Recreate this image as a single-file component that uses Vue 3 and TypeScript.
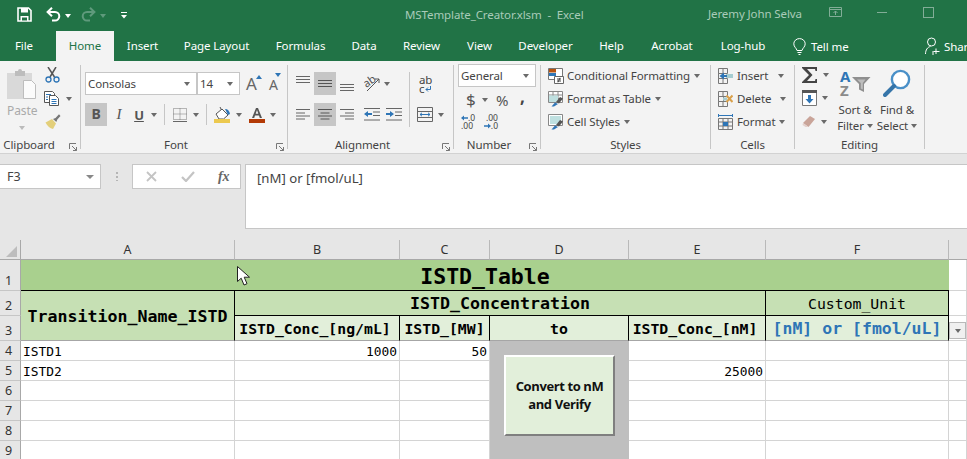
<script setup lang="ts">
interface Tab { name: string; width: number; active?: boolean }
const tabs: Tab[] = [
  { name: 'File', width: 56 }, { name: 'Home', width: 58, active: true }, { name: 'Insert', width: 57 },
  { name: 'Page Layout', width: 91 }, { name: 'Formulas', width: 77 }, { name: 'Data', width: 50 },
  { name: 'Review', width: 65 }, { name: 'View', width: 51 }, { name: 'Developer', width: 81 },
  { name: 'Help', width: 51 }, { name: 'Acrobat', width: 70 }, { name: 'Log-hub', width: 72 },
]
const columns = ['A', 'B', 'C', 'D', 'E', 'F']
const rows = [
  { n: 4, a: 'ISTD1', b: '1000', c: '50', e: '' },
  { n: 5, a: 'ISTD2', b: '', c: '', e: '25000' },
  { n: 6, a: '', b: '', c: '', e: '' },
  { n: 7, a: '', b: '', c: '', e: '' },
  { n: 8, a: '', b: '', c: '', e: '' },
  { n: 9, a: '', b: '', c: '', e: '' },
]
</script>

<template>
  <div class="app">
    <header class="titlebar">
      <div class="qat">
        <svg class="i-save" width="15" height="15" viewBox="0 0 15 15"><path d="M1 1h10.500L14 3.500V14H1z" fill="none" stroke="#fff" stroke-width="1.600"/><path d="M4 1h7v4.500H4zM3.500 9h8v5h-8z" fill="#fff"/><path d="M5 10.500h5v3H5z" fill="#217346"/></svg>
        <svg class="i-undo" width="15" height="15" viewBox="0 0 15 15"><path d="M2 5h7a4.300 4.300 0 0 1 0 8.600H6" fill="none" stroke="#fff" stroke-width="2"/><path d="M6 .8 1.600 5 6 9.200" fill="none" stroke="#fff" stroke-width="2"/></svg>
        <i class="caret white c-undo"></i>
        <svg class="i-redo" width="15" height="15" viewBox="0 0 15 15"><path d="M13 5H6a4.300 4.300 0 0 0 0 8.600h3" fill="none" stroke="#5f9a7c" stroke-width="2"/><path d="M9 .8 13.400 5 9 9.200" fill="none" stroke="#5f9a7c" stroke-width="2"/></svg>
        <i class="caret dim c-redo"></i>
        <svg class="i-qat" width="6" height="7" viewBox="0 0 6 7"><path d="M0 .5h6" stroke="#fff"/><path d="M0 3h6L3 6.500z" fill="#fff"/></svg>
      </div>
      <span class="doc-title">MSTemplate_Creator.xlsm&nbsp; -&nbsp; Excel</span>
      <span class="user">Jeremy John Selva</span>
      <svg class="i-display" width="14" height="11" viewBox="0 0 14 11"><path d="M.5.5h12v9H.5zM.5 2.500h12M6.500 8V4M4.500 6l2-2 2 2" fill="none" stroke="#82ad97"/></svg>
      <span class="i-min"></span>
      <span class="i-max"></span>
    </header>

    <nav class="tabs">
      <span v-for="t in tabs" :key="t.name" class="tab" :class="{ active: t.active }" :style="{ width: t.width + 'px' }">{{ t.name }}</span>
      <svg class="i-bulb" width="13" height="17" viewBox="0 0 13 17"><path d="M4 12.500C3.500 10 .8 9 .8 5.800a5.700 5.200 0 0 1 11.400 0C12.200 9 9.500 10 9 12.500z" fill="none" stroke="#fff"/><path d="M4.500 14.500h4M5.500 16.500h2" stroke="#fff"/></svg>
      <span class="tell">Tell me</span>
      <svg class="i-person" width="15" height="18" viewBox="0 0 15 18"><circle cx="6.500" cy="5" r="4" fill="none" stroke="#fff"/><path d="M.5 17c0-4 2-7 5-7.500M8 14v4M11 11.500v5.500M8.500 14.500h6" fill="none" stroke="#fff"/></svg>
      <span class="share">Share</span>
    </nav>

    <section class="ribbon">
      <!-- Clipboard -->
      <div class="group g-clip">
        <div class="clip-body">
          <div class="paste">
            <svg width="30" height="31" viewBox="0 0 30 31"><path d="M0 4h25v26H0z" fill="#d9d9d9"/><path d="M8 2h3a2 2 0 0 1 4 0h3v5H8z" fill="#bdbdbd"/><path d="M16.500 11.500h8l4 4v14h-12z" fill="#fbfbfb" stroke="#bdbdbd"/></svg>
            <span class="paste-label">Paste</span>
            <i class="caret pale"></i>
          </div>
          <div class="clip-tools">
            <svg width="15" height="16" viewBox="0 0 15 16"><path d="M3 0l6.500 10M11 0 5 10" stroke="#555" stroke-width="1.500" fill="none"/><circle cx="3.500" cy="12.500" r="2.500" fill="none" stroke="#2e75b6" stroke-width="1.300"/><circle cx="11.500" cy="12.500" r="2.500" fill="none" stroke="#2e75b6" stroke-width="1.300"/></svg>
            <div class="copy-row">
              <svg width="16" height="15" viewBox="0 0 16 15"><path d="M.5.5h8l2 2v9H.5z" fill="#fff" stroke="#555"/><path d="M5.500 4.500h6l3 3v7h-9z" fill="#fff" stroke="#555"/><path d="M2 3.500h5M2 6h2M2 8.500h2M7.500 8.500h5M7.500 10.500h5M7.500 12.500h5" stroke="#2e75b6"/></svg>
              <i class="caret"></i>
            </div>
            <svg width="16" height="15" viewBox="0 0 16 15"><path d="M.5 8.500 7 5l4 4.500-3 5.500C5 14.500 2.500 12 .5 8.500z" fill="#e3cf7a"/><path d="M8 5l2.500-1L14 .3l1.500 1.700-3.200 3.500-1 2.500z" fill="#777"/></svg>
          </div>
        </div>
        <div class="label lab-clip">Clipboard<svg class="launcher" width="8" height="8" viewBox="0 0 8 8"><path d="M.5 6V.5H7M3 3l4.500 4.500M4 7.500h3.500V4" fill="none" stroke="#777"/></svg></div>
      </div>

      <!-- Font -->
      <div class="group g-font">
        <div class="row font-r1">
          <div class="select fontname"><span>Consolas</span><i class="caret"></i></div>
          <div class="select fontsize"><span>14</span><i class="caret"></i></div>
          <div class="size-btn grow"><span class="a-big">A</span><svg width="6" height="4" viewBox="0 0 6 4"><path d="M0 4 3 0l3 4z" fill="#2e75b6"/></svg></div>
          <div class="size-btn shrink"><span class="a-small">A</span><svg width="6" height="4" viewBox="0 0 6 4"><path d="M0 0h6L3 4z" fill="#2e75b6"/></svg></div>
        </div>
        <div class="row font-r2">
          <span class="btn-b on">B</span>
          <span class="btn-i">I</span>
          <span class="btn-u">U</span>
          <i class="caret"></i>
          <span class="vsep"></span>
          <svg width="14" height="14" viewBox="0 0 14 14"><path d="M.5.5h13v11H.5zM7 .5v11M.5 6h13" fill="none" stroke="#777" stroke-dasharray="1 1"/><path d="M0 13.500h14" stroke="#666"/></svg>
          <i class="caret c-border"></i>
          <span class="vsep sep2"></span>
          <svg class="fill-ico" width="17" height="16" viewBox="0 0 17 16"><path d="M2 7 8 2l6 6-4.500 4H5z" fill="#fff" stroke="#555"/><path d="M7.500 3 6 0" stroke="#555"/><path d="M11 2c3 0 4.500 2 5 5l-2 1z" fill="#2e75b6"/><path d="M0 12h16v4H0z" fill="#ecc94f"/></svg>
          <i class="caret c-fill"></i>
          <svg class="color-ico" width="16" height="16" viewBox="0 0 16 16"><path d="M3 11 7 1h2l4 10h-2.200l-.8-2.500H6L5.200 11zM6.700 6.800h2.600L8 3z" fill="#555" fill-rule="evenodd"/><path d="M0 12h16v4H0z" fill="#b33a06"/></svg>
          <i class="caret c-color"></i>
        </div>
        <div class="label lab-l">Font<svg class="launcher" width="8" height="8" viewBox="0 0 8 8"><path d="M.5 6V.5H7M3 3l4.500 4.500M4 7.500h3.500V4" fill="none" stroke="#777"/></svg></div>
      </div>

      <!-- Alignment -->
      <div class="group g-align">
        <div class="align-body">
          <div class="align-main">
            <div class="row">
              <span class="cell-btn top"><svg width="14" height="8" viewBox="0 0 14 8"><path d="M0 .5h14M0 3.500h14M0 6.500h14" stroke="#666"/></svg></span>
              <span class="cell-btn on"><svg width="14" height="8" viewBox="0 0 14 8"><path d="M0 .5h14M0 3.500h14M0 6.500h14" stroke="#555"/></svg></span>
              <span class="cell-btn bottom"><svg width="14" height="8" viewBox="0 0 14 8"><path d="M0 .5h14M0 3.500h14M0 6.500h14" stroke="#666"/></svg></span>
              <svg class="orient" width="17" height="17" viewBox="0 0 17 17"><text x="0" y="10" class="ico-ab" font-size="11" transform="rotate(-35 6 8)">ab</text><path d="M3 16 15 4M11 4h4v4" fill="none" stroke="#555"/></svg>
              <i class="caret c-or"></i>
            </div>
            <div class="row r2">
              <span class="cell-btn"><svg width="14" height="11" viewBox="0 0 14 11"><path d="M0 .5h14M0 4h9M0 7h14M0 10h9" stroke="#666"/></svg></span>
              <span class="cell-btn on"><svg width="14" height="11" viewBox="0 0 14 11"><path d="M0 .5h14M2.500 4h9M0 7h14M2.500 10h9" stroke="#555"/></svg></span>
              <span class="cell-btn"><svg width="14" height="11" viewBox="0 0 14 11"><path d="M0 .5h14M5 4h9M0 7h14M5 10h9" stroke="#666"/></svg></span>
              <svg class="indent" width="16" height="13" viewBox="0 0 16 13"><path d="M0 .5h16M9 4h7M9 7.500h7M0 12h16" stroke="#666"/><path d="M0 6 4 3v2h4v2H4v2z" fill="#2e75b6"/></svg>
              <svg class="indent2" width="16" height="13" viewBox="0 0 16 13"><path d="M0 .5h16M9 4h7M9 7.500h7M0 12h16" stroke="#666"/><path d="M8 6 4 3v2H0v2h4v2z" fill="#2e75b6"/></svg>
            </div>
          </div>
          <span class="vsep tall"></span>
          <div class="align-side">
            <div class="wrap"><span class="wrap-l">ab</span><span class="wrap-l wrap-c">c<svg width="6" height="6" viewBox="0 0 6 6"><path d="M5.500 0v3.500H1M3 1.500 1 3.500l2 2" fill="none" stroke="#2e75b6"/></svg></span></div>
            <div class="merge"><svg width="16" height="15" viewBox="0 0 16 15"><path d="M.5.5h15v14H.5zM.5 4.500h15M.5 10.500h15" fill="none" stroke="#666"/><path d="M3 7.500h10M5 5.800 3 7.500l2 1.700M11 5.800l2 1.700-2 1.700" fill="none" stroke="#2e75b6"/></svg><i class="caret"></i></div>
          </div>
        </div>
        <div class="label lab-l">Alignment<svg class="launcher" width="8" height="8" viewBox="0 0 8 8"><path d="M.5 6V.5H7M3 3l4.500 4.500M4 7.500h3.500V4" fill="none" stroke="#777"/></svg></div>
      </div>

      <!-- Number -->
      <div class="group g-num">
        <div class="num-body">
          <div class="select general"><span>General</span><i class="caret"></i></div>
          <div class="row num-r2"><span class="dollar">$</span><i class="caret"></i><span class="pct">%</span><span class="comma">,</span></div>
          <div class="row num-r3">
            <div class="dec">
              <div class="dec-line"><svg width="7" height="6" viewBox="0 0 7 6"><path d="M0 3 3 .5v1.800h4v1.400H3v1.800z" fill="#2e75b6"/></svg><span>.0</span></div>
              <div class="dec-line"><span>.00</span></div>
            </div>
            <div class="dec d2">
              <div class="dec-line end"><span>.00</span></div>
              <div class="dec-line end"><svg width="7" height="6" viewBox="0 0 7 6"><path d="M7 3 4 .5v1.800H0v1.400h4v1.800z" fill="#2e75b6"/></svg><span>.0</span></div>
            </div>
          </div>
        </div>
        <div class="label lab-l">Number<svg class="launcher" width="8" height="8" viewBox="0 0 8 8"><path d="M.5 6V.5H7M3 3l4.500 4.500M4 7.500h3.500V4" fill="none" stroke="#777"/></svg></div>
      </div>

      <!-- Styles -->
      <div class="group g-styles">
        <div class="list">
          <div class="list-row">
            <svg width="16" height="16" viewBox="0 0 16 16"><path d="M.5.5h14v11H.5z" fill="#fff" stroke="#777"/><path d="M1 1h7v3.500H1z" fill="#b7520f"/><path d="M1 5h7v3H1z" fill="#2e75b6"/><path d="M6.500 8.500h9v7h-9z" fill="#fff" stroke="#666"/><path d="M9 11h4M9 13h4M12 9.800l-2 4.500" stroke="#444" fill="none"/></svg>
            <span>Conditional Formatting</span><i class="caret"></i>
          </div>
          <div class="list-row">
            <svg width="16" height="16" viewBox="0 0 16 16"><path d="M.5.5h14v11H.5zM.5 4h14M.5 7.500h14M5 .5v11M10 .5v11" fill="#fff" stroke="#888"/><path d="M1 4.500h9V11H1z" fill="#bfe0e0"/><path d="M12 6l3 1.500-4 5-3-1.500z" fill="#555"/><path d="M7 11.500 10 13 6 15.500H3.500z" fill="#2e75b6"/></svg>
            <span>Format as Table</span><i class="caret"></i>
          </div>
          <div class="list-row">
            <svg width="16" height="16" viewBox="0 0 16 16"><path d="M.5.5h14v11H.5z" fill="#fff" stroke="#888"/><path d="M2 2h11v8H2z" fill="#bfe0e0"/><path d="M12 6l3 1.500-4 5-3-1.500z" fill="#555"/><path d="M7 11.500 10 13 6 15.500H3.500z" fill="#2e75b6"/></svg>
            <span>Cell Styles</span><i class="caret"></i>
          </div>
        </div>
        <div class="label">Styles</div>
      </div>

      <!-- Cells -->
      <div class="group g-cells">
        <div class="list">
          <div class="list-row">
            <svg width="15" height="16" viewBox="0 0 15 16"><path d="M.5.500h9v5h-9zM5 .5v5M.5 5.500h5v5h-5zM.5 10.500h9v5h-9zM5 10.500v5" fill="none" stroke="#777"/><path d="M8 6h7v4H8z" fill="#a6ccd0"/><path d="M1.500 8 6 4.500v2.500h3v2H6v2.500z" fill="#2e75b6"/></svg>
            <span>Insert</span><i class="caret c-ins"></i>
          </div>
          <div class="list-row">
            <svg width="15" height="16" viewBox="0 0 15 16"><path d="M.5.500h9v5h-9zM5 .5v5M.5 5.500h5v5h-5zM.5 10.500h9v5h-9zM5 10.500v5" fill="none" stroke="#777"/><path d="M5 6.500h4v3H5z" fill="#a6ccd0"/><path d="M8.500 4.500l6 6.500M14.500 4.500l-6 6.500" stroke="#d9a04a" stroke-width="2"/></svg>
            <span>Delete</span><i class="caret c-del"></i>
          </div>
          <div class="list-row">
            <svg width="15" height="16" viewBox="0 0 15 16"><path d="M.5 1.500h14M.5 0v3M14.500 0v3" stroke="#2e75b6"/><path d="M.5 4.500h14v11H.5zM.5 8h14M.5 12h14M5 4.500v11M10 4.500v11" fill="none" stroke="#777"/><path d="M5 8h5v4H5z" fill="#2e75b6"/></svg>
            <span>Format</span><i class="caret c-for"></i>
          </div>
        </div>
        <div class="label">Cells</div>
      </div>

      <!-- Editing -->
      <div class="group g-edit">
        <div class="edit-body">
          <div class="edit-col">
            <div class="edit-row"><svg class="sigma" width="16" height="16" viewBox="0 0 16 16"><path d="M0 0h15v4h-1.500L13 2H5l5.500 6L5 14h8l.5-2H15v4H0v-1l7-7-7-7z" fill="#444"/></svg><i class="caret"></i></div>
            <div class="edit-row"><svg class="down" width="15" height="16" viewBox="0 0 15 16"><path d="M.5.5h14v15H.5z" fill="#fff" stroke="#777"/><path d="M0 0h15v3H0z" fill="#555"/><path d="M6 5h3v4h2.500l-4 4.500-4-4.500H6z" fill="#2e75b6"/></svg><i class="caret"></i></div>
            <div class="edit-row"><svg class="eraser" width="14" height="13" viewBox="0 0 14 13"><path d="M1 8 8 1l5 3-6.500 8z" fill="#c9a499"/><path d="M1 8l5.500 4H3.500L.5 10z" fill="#e3d0cb"/></svg><i class="caret"></i></div>
          </div>
          <div class="big sort">
            <div class="sort-ico">
              <div class="az"><span class="az-a">A</span><span class="az-z">Z</span></div>
              <svg width="19" height="16" viewBox="0 0 19 16"><path d="M0 1h18.500L12 8v8l-5-2.500V8z" fill="#8f8f8f"/><path d="M5 3.500h8.500L10.800 7v6.500L8.800 12.500V7z" fill="#bdbdbd"/></svg>
            </div>
            <span>Sort &amp;</span>
            <span>Filter<i class="caret in"></i></span>
          </div>
          <div class="big find">
            <svg width="28" height="28" viewBox="0 0 28 28"><circle cx="17.500" cy="10.500" r="8.600" fill="#fff" stroke="#4a90c8" stroke-width="2.400"/><path d="M11 17 2 26" stroke="#3675a9" stroke-width="4" stroke-linecap="round"/></svg>
            <span>Find &amp;</span>
            <span>Select<i class="caret in"></i></span>
          </div>
        </div>
        <div class="label">Editing</div>
      </div>
    </section>

    <section class="formula">
      <div class="namebox"><span>F3</span><i class="caret big-c"></i></div>
      <span class="dots"></span>
      <div class="fx-box">
        <svg width="11" height="11" viewBox="0 0 11 11"><path d="M1 1l9 9M10 1l-9 9" stroke="#c4c4c4" stroke-width="1.800"/></svg>
        <svg width="14" height="11" viewBox="0 0 14 11"><path d="M1 6l4 4 8-9" fill="none" stroke="#c4c4c4" stroke-width="2.200"/></svg>
        <span class="fx">fx</span>
      </div>
      <div class="finput">[nM] or [fmol/uL]</div>
    </section>

    <section class="sheet">
      <div class="corner"><svg width="11" height="11" viewBox="0 0 11 11"><path d="M11 0v11H0z" fill="#bdbdbd"/></svg></div>
      <div v-for="c in columns" :key="c" class="colhead">{{ c }}</div>
      <div class="colhead last"></div>

      <div class="rowhead">1</div>
      <div class="title">ISTD_Table</div>
      <div class="c"></div>

      <div class="rowhead">2</div>
      <div class="name-head">Transition_Name_ISTD</div>
      <div class="conc-head">ISTD_Concentration</div>
      <div class="unit-head">Custom_Unit</div>
      <div class="c"></div>

      <div class="rowhead">3</div>
      <div class="sub shift">ISTD_Conc_[ng/mL]</div>
      <div class="sub">ISTD_[MW]</div>
      <div class="sub">to</div>
      <div class="sub shift">ISTD_Conc_[nM]</div>
      <div class="sub unit">[nM] or [fmol/uL]</div>
      <div class="c dd-cell"><span class="dropdown"><i class="caret"></i></span></div>

      <template v-for="(r, i) in rows" :key="r.n">
        <div class="rowhead">{{ r.n }}</div>
        <div class="c">{{ r.a }}</div>
        <div class="c num">{{ r.b }}</div>
        <div class="c num">{{ r.c }}</div>
        <div v-if="i === 0" class="shape-bg"><div class="macro-btn">Convert to nM<br>and Verify</div></div>
        <div class="c num">{{ r.e }}</div>
        <div class="c"></div>
        <div class="c"></div>
      </template>

      <svg class="cursor" width="14" height="20" viewBox="0 0 14 20"><path d="M.5.5V15.500l3.700-3.300 2.800 6.800 3-1.300-2.800-6.500h5.300z" fill="#fff" stroke="#222"/></svg>
    </section>
  </div>
</template>

<style>
html, body { margin: 0; overflow: hidden; background: #fff; }
</style>

<style scoped>
.app { width: 967px; height: 459px; overflow: hidden; font-family: "Noto Sans", "Open Sans", sans-serif; font-size: 11.500px; letter-spacing: -.1px; color: #444; display: flex; flex-direction: column; }
.caret { display: inline-block; flex: none; width: 0; height: 0; border-left: 3.500px solid transparent; border-right: 3.500px solid transparent; border-top: 4px solid #6a6a6a; }
.caret.white { border-top-color: #fff; }
.caret.dim { border-top-color: #5f9a7c; }
.caret.pale { border-top-color: #bbb; }

.titlebar { height: 31px; flex: none; background: #217346; display: flex; align-items: center; color: #a9cbb9; }
.qat { display: flex; align-items: center; width: 405px; padding-left: 17px; box-sizing: border-box; margin-top: -2px; }
.i-undo { margin-left: 14px; }
.c-undo { margin-left: 4px; margin-top: 2px; }
.i-redo { margin-left: 10px; }
.c-redo { margin-left: 4px; margin-top: 2px; }
.i-qat { margin-left: 15px; margin-top: 2px; }
.doc-title { width: 303px; flex: none; margin-top: -3px; }
.user { width: 121px; flex: none; margin-top: -4px; }
.i-display { margin-right: 34px; flex: none; margin-top: -6px; }
.i-min { width: 10px; height: 1px; background: #82ad97; flex: none; margin-right: 36px; margin-top: -6px; }
.i-max { width: 9px; height: 9px; border: 1px solid #82ad97; flex: none; margin-top: -6px; }

.tabs { height: 30px; flex: none; background: #217346; display: flex; align-items: center; color: #fff; white-space: nowrap; }
.tab { flex: none; height: 30px; line-height: 29px; text-align: center; box-sizing: border-box; }
.tab:first-child { text-align: left; padding-left: 15px; }
.tab.active { background: #f3f3f3; color: #217346; }
.i-bulb { margin-left: 14px; flex: none; }
.tell { margin-left: 5px; width: 114px; flex: none; }
.i-person { flex: none; }
.share { margin-left: 4px; }

.ribbon { height: 92px; flex: none; background: #f3f3f3; border-bottom: 1px solid #d2d2d2; display: flex; box-sizing: content-box; }
.group { height: 84px; margin-top: 4px; flex: none; border-right: 1px solid #c6c6c6; box-sizing: border-box; position: relative; display: flex; flex-direction: column; }
.label { position: absolute; left: 0; right: 0; top: 72px; height: 16px; line-height: 16px; text-align: center; color: #444; }
.lab-l { padding-right: 16px; }
.lab-clip { padding-right: 22px; text-align: center; }
.launcher { position: absolute; right: 3px; top: 6px; }
.row { display: flex; align-items: center; }

.g-clip { width: 81px; }
.clip-body { display: flex; height: 72px; }
.paste { width: 44px; padding-left: 7px; box-sizing: border-box; display: flex; flex-direction: column; align-items: flex-start; padding-top: 4px; }
.paste-label { color: #aaa; width: 27px; text-align: center; margin-top: 3px; line-height: 16px; font-size: 12px; }
.paste .caret { margin-left: 12px; margin-top: 7px; }
.clip-tools { display: flex; flex-direction: column; padding-top: 2px; align-items: flex-start; }
.clip-tools > svg:first-child { margin-left: 1px; }
.copy-row { display: flex; align-items: center; margin-top: 8px; margin-bottom: 8px; }
.copy-row .caret { margin-left: 6px; }
.clip-tools > svg:last-child { margin-left: 1px; }

.g-font { width: 207px; padding-left: 4px; }
.font-r1 { height: 23px; margin-top: 7px; }
.select { background: #fff; border: 1px solid #c6c6c6; box-sizing: border-box; display: flex; align-items: center; justify-content: space-between; padding: 0 6px 0 2px; height: 23px; color: #444; }
.fontname { width: 111px; border-right: none; }
.fontsize { width: 44px; border-left: 2px solid #c6c6c6; }
.size-btn { display: flex; align-items: flex-start; height: 23px; color: #666; }
.grow { margin-left: 6px; }
.shrink { margin-left: 7px; }
.a-big { font-size: 17px; line-height: 23px; letter-spacing: 0; }
.a-small { font-size: 14px; line-height: 25px; letter-spacing: 0; }
.grow svg { margin-top: 3px; margin-left: -1px; }
.shrink svg { margin-top: 1px; margin-left: -3px; }
.font-r2 { height: 23px; margin-top: 8px; }
.btn-b { width: 22px; height: 23px; line-height: 22px; text-align: center; font-weight: 700; font-size: 14px; background: #c6c6c6; color: #555; flex: none; }
.btn-i { width: 10px; margin-left: 7px; text-align: center; font: italic 15px "Liberation Serif", serif; color: #555; }
.btn-u { width: 14px; margin-left: 8px; text-align: center; font-weight: 700; font-size: 13px; color: #555; text-decoration: underline; }
.font-r2 .caret { margin-left: 5px; }
.vsep { display: block; width: 1px; height: 21px; background: #c6c6c6; flex: none; margin-left: 7px; margin-right: 8px; }
.font-r2 .c-border { margin-left: 6px; }
.sep2 { margin-left: 7px; margin-right: 7px; }
.color-ico { margin-left: 7px; }

.g-align { width: 166px; padding-left: 4px; }
.align-body { display: flex; padding-top: 7px; }
.align-main { width: 116px; flex: none; }
.align-main .r2 { margin-top: 8px; }
.cell-btn { width: 22px; height: 23px; display: flex; align-items: center; justify-content: center; flex: none; box-sizing: border-box; }
.cell-btn.top { align-items: flex-start; padding-top: 4px; }
.cell-btn.on { background: #c6c6c6; }
.cell-btn.bottom { align-items: flex-end; padding-bottom: 3px; }
.orient { margin-left: 6px; }
.ico-ab { font-family: "Noto Sans", sans-serif; fill: #555; }
.c-or { margin-left: 3px; }
.indent { margin-left: 6px; }
.indent2 { margin-left: 6px; }
.vsep.tall { height: 55px; margin: 0 0 0 1px; }
.align-side { display: flex; flex-direction: column; padding-left: 9px; }
.wrap { display: flex; flex-direction: column; font-size: 11.500px; height: 23px; padding-top: 3px; box-sizing: border-box; color: #444; }
.wrap-l { height: 9px; line-height: 9px; display: flex; align-items: center; gap: 1px; }
.merge { display: flex; align-items: center; height: 23px; margin-top: 8px; margin-left: -2px; }
.merge .caret { margin-left: 5px; }

.g-num { width: 87px; padding-left: 4px; }
.num-body { margin-top: -1px; }
.general { width: 78px; }
.num-r2 { height: 23px; margin-top: 1px; padding-left: 8px; }
.dollar { font-size: 17px; width: 11px; color: #555; }
.num-r2 .caret { margin-left: 5px; }
.pct { font-size: 15px; margin-left: 8px; width: 16px; color: #555; }
.comma { font-size: 17px; font-weight: 700; margin-left: 8px; line-height: 14px; margin-top: -6px; }
.num-r3 { height: 21px; padding-left: 3px; }
.dec { width: 15px; font-size: 8.500px; letter-spacing: 0; color: #444; flex: none; }
.d2 { margin-left: 7px; }
.dec-line { height: 8px; line-height: 8px; display: flex; align-items: center; }
.dec-line.end { justify-content: flex-end; }

.g-styles { width: 170px; padding-left: 7px; }
.g-cells { width: 84px; padding-left: 7px; }
.list { margin-top: -1px; }
.list-row { height: 23px; display: flex; align-items: center; white-space: nowrap; }
.list-row svg { flex: none; margin-right: 3px; }
.list-row .caret { margin-left: 4px; }
.g-cells .list-row svg { margin-right: 4px; }
.g-cells .list-row .c-ins { margin-left: 10px; }
.g-cells .list-row .c-del { margin-left: 9px; }
.g-cells .list-row .c-for { margin-left: 4px; }

.g-edit { width: 130px; }
.edit-body { display: flex; }
.edit-col { width: 39px; padding-left: 7px; box-sizing: border-box; flex: none; margin-top: -2px; }
.edit-row { height: 23.500px; display: flex; align-items: center; }
.edit-row .caret { margin-left: 5px; }
.big { display: flex; flex-direction: column; align-items: center; line-height: 16px; width: 42px; padding-top: 4px; flex: none; white-space: nowrap; }
.big > svg { margin-bottom: 5px; }
.big .caret.in { margin-left: 3px; vertical-align: 2px; }
.sort-ico { display: flex; align-items: flex-start; height: 28px; margin-bottom: 5px; width: 30px; }
.az { display: flex; flex-direction: column; width: 12px; font-weight: 700; font-size: 15px; line-height: 14px; flex: none; }
.az-a { color: #2e75b6; }
.az-z { color: #8a8a8a; }
.sort-ico svg { margin-top: 7px; flex: none; }

.formula { height: 86px; flex: none; background: #e6e6e6; display: flex; align-items: flex-start; padding-top: 10px; box-sizing: border-box; }
.namebox { width: 101px; height: 25px; background: #fff; border: 1px solid #c6c6c6; border-left: none; box-sizing: border-box; display: flex; align-items: center; justify-content: space-between; padding: 0 6px 0 7px; flex: none; color: #444; font-size: 12.500px; }
.big-c { border-left-width: 4px; border-right-width: 4px; border-top-color: #888; }
.dots { width: 2px; height: 9px; margin: 8px 14px 0 15px; flex: none; background: repeating-linear-gradient(#b5b5b5 0 2px, transparent 2px 4px); }
.fx-box { width: 109px; height: 25px; background: #fff; border: 1px solid #c6c6c6; box-sizing: border-box; display: flex; align-items: center; padding-left: 13px; gap: 24px; flex: none; }
.fx-box .fx { font: italic 700 14px "Liberation Serif", serif; color: #666; margin-left: -1px; }
.finput { margin-left: 4px; flex: 1; height: 65px; background: #fff; border: 1px solid #c6c6c6; border-right: none; box-sizing: border-box; padding: 4px 0 0 11px; font-size: 13.200px; line-height: 18px; letter-spacing: 0; color: #444; }

.sheet { position: relative; flex: 1; display: grid; grid-template-columns: 21px 214px 165px 90px 139px 137px 183px 18px; grid-template-rows: 20px 31px 25px 25px 20px 20px 20px 20px 20px 20px; font-family: "DejaVu Sans Mono", monospace; color: #000; background: #fff; letter-spacing: 0; }
.sheet > div { box-sizing: border-box; min-width: 0; white-space: nowrap; }
.corner { background: #e6e6e6; border-right: 1px solid #a8a8a8; border-bottom: 1px solid #a8a8a8; padding: 6px 0 0 6px; }
.corner svg { display: block; }
.colhead { background: #e6e6e6; border-right: 1px solid #b9b9b9; border-bottom: 1px solid #a8a8a8; text-align: center; font: 12.500px/20px "Noto Sans", sans-serif; color: #333; }
.colhead.last { border-right: none; }
.rowhead { background: #e6e6e6; border-right: 1px solid #a8a8a8; border-bottom: 1px solid #c6c6c6; font: 12.500px "Noto Sans", sans-serif; color: #333; display: flex; align-items: flex-end; padding: 0 0 1px 5px; }
.c { border-right: 1px solid #d4d4d4; border-bottom: 1px solid #d4d4d4; font-size: 12.900px; line-height: 21px; padding: 0 2px; overflow: hidden; }
.num { text-align: right; }
.title { grid-column: span 6; background: #a9d08e; border-bottom: 1px solid #000; font-weight: 700; font-size: 21.500px; line-height: 34px; text-align: center; }
.name-head { grid-row: span 2; background: #c6e0b4; border-right: 1px solid #000; border-bottom: 1px solid #a6a6a6; font-weight: 700; font-size: 16.600px; text-align: center; display: flex; align-items: center; justify-content: center; padding-top: 1px; }
.conc-head { grid-column: span 4; background: #c6e0b4; border-right: 1px solid #000; border-bottom: 1px solid #000; font-weight: 700; font-size: 16.600px; line-height: 25px; text-align: center; }
.unit-head { background: #c6e0b4; border-right: 1px solid #000; border-bottom: 1px solid #000; font-size: 14.800px; line-height: 26px; text-align: center; }
.sub { background: #e2efda; border-right: 1px solid #000; border-bottom: 1px solid #a6a6a6; font-weight: 700; font-size: 14.800px; line-height: 25px; text-align: center; }
.sub.shift { padding-right: 4px; }
.sub.unit { font-size: 16.500px; color: #2e75b6; }
.dd-cell { position: relative; overflow: visible; }
.dropdown { position: absolute; left: 0; top: 6px; width: 17px; height: 17px; background: #f0f0f0; border: 1px solid #b9b9b9; display: flex; align-items: center; justify-content: center; box-sizing: border-box; }
.shape-bg { grid-row: span 6; background: #bfbfbf; display: flex; justify-content: center; padding-top: 14px; }
.macro-btn { width: 111px; height: 81px; background: #e2efda; box-sizing: border-box; border: 2px solid; border-color: #fff #7f7f7f #7f7f7f #fff; padding-bottom: 2px; font: 700 13px/18px "Open Sans", sans-serif; letter-spacing: -.4px; color: #111; display: flex; align-items: center; justify-content: center; text-align: center; }
.cursor { position: absolute; left: 237px; top: 26px; }
</style>
